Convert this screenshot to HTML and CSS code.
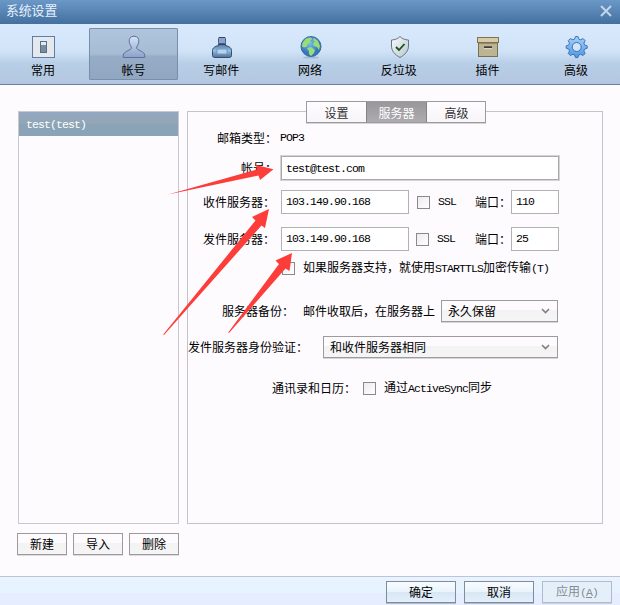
FILE: index.html
```html
<!DOCTYPE html>
<html lang="zh-CN">
<head>
<meta charset="utf-8">
<title>系统设置</title>
<link rel="stylesheet" href="styles.css">
</head>
<body>
<div class="window">
  <header class="titlebar">
    <span>系统设置</span>
    <svg class="close" width="14" height="14" viewBox="0 0 14 14"><path d="M2 2 12 12M12 2 2 12"/></svg>
  </header>
  <nav class="toolbar">
    <div class="tool first">
      <svg width="24" height="24" viewBox="0 0 24 24">
        <rect x="1.5" y="1.5" width="22" height="21" fill="#e5e9ec" stroke="#637ba5"/>
        <rect x="9.5" y="6.5" width="6" height="11" fill="#dcebf7" stroke="#536f96"/>
        <rect x="10" y="10" width="5" height="7" fill="#7e8b98"/>
      </svg>
      <span>常用</span>
    </div>
    <div class="tool active">
      <svg width="24" height="24" viewBox="0 0 24 24">
        <defs><linearGradient id="person" x2="0" y2="1"><stop stop-color="#d5e3fa"/><stop offset="1" stop-color="#8ba1c8"/></linearGradient></defs>
        <path d="M12 1.2C8.500 1.2 7 3.500 7.200 6.500c.2 3.300 2.200 4.500 2.200 6.500 0 1.900-6.300 3-7.800 6-.5 1-.5 2.200-.3 3.500h21.400c.2-1.300.2-2.500-.3-3.500-1.500-3-7.800-4.100-7.800-6 0-2 2-3.200 2.200-6.500.2-3-1.300-5.300-4.800-5.300Z" fill="url(#person)" stroke="#5d7198"/>
      </svg>
      <span>帐号</span>
    </div>
    <div class="tool">
      <svg width="24" height="24" viewBox="0 0 24 24">
        <defs><linearGradient id="ink" x2="0" y2="1"><stop stop-color="#4a6b91"/><stop offset=".5" stop-color="#8fc0e4"/><stop offset="1" stop-color="#4f6f91"/></linearGradient></defs>
        <path d="M9.500 8.500v2C5.500 11.500 3.500 13 3.500 15.500v5c0 1.300 1 2 2 2h15c1 0 2-.7 2-2v-5c0-2.500-2-4-6-5v-2Z" fill="url(#ink)" stroke="#344c70"/>
        <rect x="9.500" y="2.500" width="7" height="6" rx="1" fill="#8ca3cf" stroke="#445b83"/>
        <path d="M10 2.500h6M9 9.500h8" stroke="#34445f"/>
        <rect x="8" y="14" width="10" height="5" fill="#b5d5ef" stroke="#7398bd"/>
      </svg>
      <span>写邮件</span>
    </div>
    <div class="tool">
      <svg width="24" height="24" viewBox="0 0 24 24">
        <defs><radialGradient id="globe" cx=".45" cy=".35"><stop stop-color="#78bcef"/><stop offset="1" stop-color="#3476bc"/></radialGradient></defs>
        <ellipse cx="13" cy="22.500" rx="8" ry="1" fill="#a4b9cf"/>
        <circle cx="13" cy="11.500" r="10" fill="url(#globe)" stroke="#396ba3"/>
        <path d="M4.500 8 8 3.500l5-1 1 2-2 1 1 2-3 1-1 3-3 1-2-1ZM16 3l4 3 2 5-1 4-2-3-3-1-1-3 2-1-2-2ZM9 13l4-1 4 3-1 3-3 3-2-2v-3Z" fill="#9bdd75"/>
      </svg>
      <span>网络</span>
    </div>
    <div class="tool">
      <svg width="24" height="24" viewBox="0 0 24 24">
        <defs><linearGradient id="shield" x2="1" y2="1"><stop stop-color="#fbfcfc"/><stop offset="1" stop-color="#b8c5ce"/></linearGradient></defs>
        <path d="M13 1.500c-2 2.200-5 3.400-8.500 3.500v6c0 5 3.500 8.800 8.500 11.500 5-2.700 8.500-6.500 8.500-11.500V5C18 4.900 15 3.700 13 1.500Z" fill="url(#shield)" stroke="#667886"/>
        <path d="m9 12 3 3 5.500-6" fill="none" stroke="#174f1b" stroke-width="1.800"/>
      </svg>
      <span>反垃圾</span>
    </div>
    <div class="tool">
      <svg width="24" height="24" viewBox="0 0 24 24">
        <rect x="3.500" y="7.500" width="19" height="14" fill="#bdb493" stroke="#79704e"/>
        <rect x="2.500" y="2.500" width="21" height="5" fill="#d7cca6" stroke="#7d7455"/>
        <path d="M4 8.500h18" stroke="#928a68"/>
        <path d="M9 12.200h8" stroke="#403a32" stroke-width="1.800"/>
        <path d="M9 13.700h8" stroke="#e7e0c4"/>
      </svg>
      <span>插件</span>
    </div>
    <div class="tool">
      <svg width="24" height="24" viewBox="0 0 24 24">
        <defs><linearGradient id="gear" x2="0" y2="1"><stop stop-color="#a5d2fa"/><stop offset="1" stop-color="#4f95e4"/></linearGradient></defs>
        <path transform="translate(.7 0)" d="m10.800 1.500 2.400 0 1 2.700 1.600.6 2.600-1.200 2 2-1.200 2.600.7 1.700 2.600 1v2.300l-2.600 1-.7 1.700 1.200 2.600-2 2-2.600-1.200-1.600.6-1 2.700h-2.400l-1-2.700-1.600-.6-2.600 1.200-2-2 1.200-2.600-.7-1.700-2.600-1v-2.300l2.600-1 .7-1.700-1.200-2.600 2-2 2.600 1.200 1.600-.6ZM12 7.500a4.500 4.500 0 1 0 0 9 4.500 4.500 0 0 0 0-9Z" fill="url(#gear)" fill-rule="evenodd" stroke="#3972b4"/>
      </svg>
      <span>高级</span>
    </div>
  </nav>

  <main class="content">
    <aside class="sidebar">
      <div class="accounts"><div class="account">test(test)</div></div>
      <div class="actions"><button>新建</button><button>导入</button><button>删除</button></div>
    </aside>
    <section class="panel">
      <div class="tabs"><div class="tab">设置</div><div class="tab on">服务器</div><div class="tab">高级</div></div>
      <div class="row type"><span class="label">邮箱类型：</span><span class="mono">POP3</span></div>
      <div class="row account-row"><span class="label">帐号：</span><div class="field focus">test@test.com</div></div>
      <div class="row incoming"><span class="label">收件服务器：</span><div class="field host">103.149.90.168</div><i class="check"></i><span class="mono ssl">SSL</span><span class="port-label">端口：</span><div class="field port">110</div></div>
      <div class="row outgoing"><span class="label">发件服务器：</span><div class="field host">103.149.90.168</div><i class="check"></i><span class="mono ssl">SSL</span><span class="port-label">端口：</span><div class="field port">25</div></div>
      <div class="row starttls"><i class="check"></i><span>如果服务器支持，就使用<b class="mono">STARTTLS</b>加密传输<b class="mono">(T)</b></span></div>
      <div class="row backup"><span class="label">服务器备份：</span><span class="hint">邮件收取后，在服务器上</span><div class="select">永久保留<svg width="9" height="6" viewBox="0 0 9 6"><path d="m1 1 3.500 3.500L8 1"/></svg></div></div>
      <div class="row auth"><span class="label">发件服务器身份验证：</span><div class="select">和收件服务器相同<svg width="9" height="6" viewBox="0 0 9 6"><path d="m1 1 3.500 3.500L8 1"/></svg></div></div>
      <div class="row sync"><span class="label">通讯录和日历：</span><i class="check"></i><span>通过<b class="mono">ActiveSync</b>同步</span></div>
    </section>
  </main>

  <footer class="footer"><button>确定</button><button>取消</button><button class="disabled">应用<b class="mono">(<u>A</u>)</b></button></footer>

  <svg class="arrows" width="620" height="605" viewBox="0 0 620 605">
    <path d="M168 194.500 257 169.500 256 165 273.500 169.300 260 180 258.500 175.500Z"/>
    <path d="M163.200 334.500 255.500 220.500 252 217 269 209 265 228 261.500 225.500 164 335Z"/>
    <path d="M228.200 332.500 279 264 275.500 260.500 292 253 289.500 271 285.500 268.500 229 333Z"/>
  </svg>
</div>
</body>
</html>
```
FILE: styles.css
```css
* { box-sizing: border-box; }
body {
  margin: 0;
  font: 12px/16px "Noto Sans CJK SC", sans-serif;
  color: #000;
}
.window {
  position: relative;
  display: flex;
  flex-direction: column;
  width: 620px;
  height: 605px;
  overflow: hidden;
  background: #fefbff;
  white-space: nowrap;
}
.mono, .field, .account {
  font-family: "Liberation Mono", monospace;
  font-size: 11.500px;
  font-weight: normal;
  letter-spacing: -0.9px;
}
.titlebar {
  display: flex;
  justify-content: space-between;
  height: 24px;
  padding: 0 7px 0 6px;
  background: linear-gradient(#6c98c7, #44709f);
  color: #e5f0fc;
  font-size: 12.800px;
  line-height: 19px;
}
.close { margin-top: 4px; fill: none; stroke: #c1d6ec; stroke-width: 2; }
.toolbar {
  display: flex;
  height: 61px;
  padding-top: 4px;
  background: linear-gradient(#d9eaff, #d1e3f7 45%, #b8cfe7 65%, #b3c6df);
  border-bottom: 1px solid #687f9f;
}
.tool {
  display: flex;
  flex-direction: column;
  align-items: center;
  flex: 0 0 88.700px;
  height: 52px;
  padding-top: 7px;
  gap: 3px;
}
.tool.first { flex-basis: 89px; padding-right: 3px; }
.tool.active {
  flex-basis: 89px;
  margin-right: -1px;
  padding-top: 6px;
  border: 1px solid #788ea9;
  border-radius: 1px;
  background: linear-gradient(#afc4dd, #a6bcd4 50%, #97adc7 55%, #91a7c1);
}
.content { display: flex; height: 491px; padding: 26px 17px 0; }
.sidebar { width: 162px; margin-right: 8px; }
.accounts { width: 161px; height: 413px; margin-left: 1px; border: 1px solid #c9c9cd; }
.account {
  height: 24px;
  padding-left: 7px;
  background: linear-gradient(#93a7c2, #93a6b5 49%, #8ba3b6 51%, #89a3b8);
  color: #fff;
  line-height: 25px;
}
.actions { display: flex; gap: 6px; margin-top: 9px; }
button {
  height: 22px;
  padding: 0;
  border: 1px solid #9d9ba0;
  background: linear-gradient(#fefbff 45%, #f3f3f3 46%, #f5f5f5);
  box-shadow: 0 1px #dddbdc;
  color: #000;
  font: inherit;
}
.actions button { width: 50px; }
.panel { width: 416px; height: 413px; border: 1px solid #c5c3c7; }
.tabs {
  display: flex;
  width: 180px;
  height: 22px;
  margin: -11px 0 0 118px;
  border: 1px solid #9d9ba0;
  background: linear-gradient(#fefcff, #f7f5f8);
  box-shadow: 0 1px #d6d4d7;
}
.tab { flex: 0 0 59px; color: #333; line-height: 22px; text-align: center; }
.tab.on { flex-basis: 61px; background: linear-gradient(#99979a, #adabae); color: #fff; border: solid #858386; border-width: 0 1px; }
.row { display: flex; align-items: center; }
.type { height: 20px; margin-top: 5px; padding-left: 29px; gap: 3px; }
.account-row { height: 26px; margin-top: 7px; padding-left: 53px; gap: 3px; }
.field { height: 24px; padding-left: 4px; border: 1px solid #b3b1b4; background: #fff; line-height: 22px; }
.focus { width: 280px; height: 26px; border-color: #d6d3d3; box-shadow: inset 0 0 0 1px #aaa8aa; padding-left: 5px; line-height: 25px; }
.incoming { height: 24px; margin-top: 9px; padding-left: 15px; }
.outgoing { height: 24px; margin-top: 13px; padding-left: 15px; }
.host { width: 128px; margin-left: 6px; }
.check { width: 13px; height: 13px; border: 1px solid #8b898c; background: linear-gradient(135deg, #ececef, #fff); }
.incoming .check { margin-left: 8px; }
.outgoing .check { margin-left: 7px; }
.ssl { width: 37px; margin-left: 8px; }
.outgoing .ssl { width: 38px; }
.port-label { width: 36px; }
.port { width: 48px; }
.starttls { height: 20px; margin-top: 7px; padding-left: 94px; gap: 8px; }
.backup { height: 22px; margin-top: 22px; padding-left: 34px; }
.hint { margin-left: 9px; }
.select {
  display: flex;
  align-items: center;
  justify-content: space-between;
  width: 117px;
  height: 22px;
  margin-left: 6px;
  padding: 0 7px 0 6px;
  border: 1px solid #9d9ba0;
  background: linear-gradient(#fefbff 45%, #f3f3f3 46%, #f5f5f5);
  box-shadow: 0 1px #d7d4d1;
}
.select svg { fill: none; stroke: #817f82; stroke-width: 1.600; }
.auth { height: 22px; margin-top: 14px; }
.auth .select { width: 235px; margin-left: 15px; }
.sync { height: 20px; margin-top: 20px; padding-left: 84px; }
.sync .check { margin: 0 8px 0 7px; }
.footer {
  display: flex;
  justify-content: flex-end;
  gap: 8px;
  height: 29px;
  padding: 4px 8px 0;
  border-top: 1px solid #bbc5d7;
  background: linear-gradient(#eaf3ff, #e5f2ff 16px, #e6edff 16px);
}
.footer button { width: 70px; border-color: #7e8c9b; background: linear-gradient(#f8fcff, #e9f3fd 50%, #d9e7f5 52%, #e3effb); box-shadow: 0 1px #aebccb; }
.footer .disabled { border-color: #b0bccb; color: #858b95; background: #e5effa; box-shadow: 0 1px #c9d4e0; }
.arrows { position: absolute; top: 0; left: 0; fill: #fc3d39; pointer-events: none; }
```
